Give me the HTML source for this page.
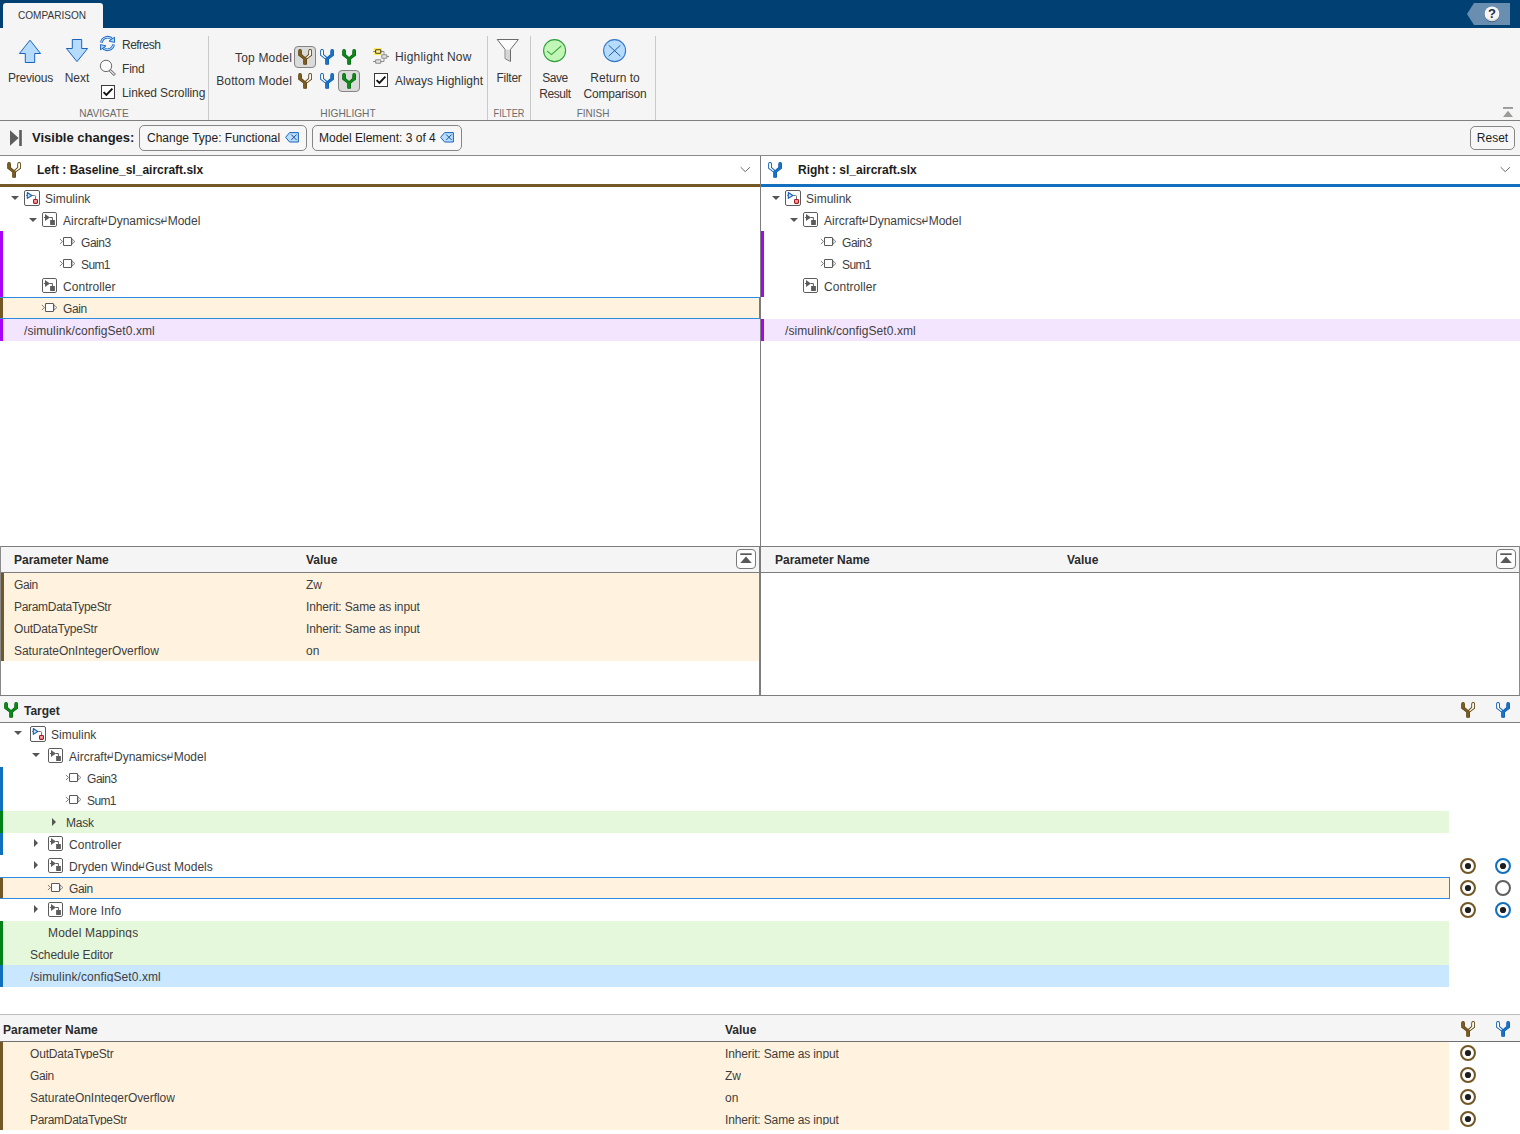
<!DOCTYPE html>
<html lang="en"><head><meta charset="utf-8"><title>Comparison</title>
<style>
html,body{margin:0;padding:0}
body{width:1520px;height:1134px;position:relative;overflow:hidden;background:#fff;
 font-family:"Liberation Sans",sans-serif;font-size:12px;color:#212121}
.abs{position:absolute}
svg{display:block;overflow:visible}
.t{white-space:nowrap;line-height:22px;height:22px;font-size:12px;color:#3e3e3e}
.tb{white-space:nowrap;line-height:16px;font-size:12px;color:#363636}
.grp{white-space:nowrap;line-height:12px;font-size:11px;color:#6b6b6b;text-align:center}
.b{font-weight:bold;color:#2a2a2a}
.clip{height:16px;overflow:hidden}
.ret{font-family:"DejaVu Sans",sans-serif;font-size:9px;color:#444;display:inline-block;width:7px;text-indent:-0.3px;transform:translateY(2.5px) scaleY(1.7);transform-origin:50% 75%}
.sep{position:absolute;top:36px;width:1px;height:84px;background:#c9c9c9}
.chip{position:absolute;top:125px;height:24px;border:1px solid #868686;border-radius:5px;background:#f7f7f7;box-sizing:content-box}
.row{position:absolute;left:0;height:22px}
</style></head><body>

<div class="abs" style="left:0;top:0;width:1520px;height:28px;background:#004073"></div>
<div class="abs" style="left:3px;top:3px;width:100px;height:26px;background:#f5f5f5;border-radius:3px 3px 0 0"></div>
<div class="abs tb" style="left:18px;top:8px;font-size:11px;line-height:14px;transform:scaleX(0.915);transform-origin:0 50%">COMPARISON</div>
<svg class="abs" style="left:1467px;top:3px" width="44" height="22" viewBox="0 0 44 22"><path d="M0 11 L7 0 H43 V22 H7 Z" fill="#698eb0"/><circle cx="25" cy="11.6" r="7.6" fill="#1f3a5c" opacity="0.55"/><circle cx="25" cy="10.8" r="7.4" fill="#f6f6f6"/><path d="M18.2 13.6 A7.4 7.4 0 0 0 31.8 13.6 A9 9 0 0 1 18.2 13.6 Z" fill="#d4d4d4"/><text x="25" y="15.2" text-anchor="middle" font-family="Liberation Sans, sans-serif" font-size="13" font-weight="bold" fill="#1d2b45">?</text></svg>
<div class="abs" style="left:0;top:28px;width:1520px;height:92px;background:#f5f5f5"></div>
<div class="abs" style="left:0;top:120px;width:1520px;height:1px;background:#7f7f7f"></div>
<div class="abs" style="left:0;top:121px;width:1520px;height:34px;background:#f5f5f5"></div>
<div class="abs" style="left:0;top:155px;width:1520px;height:1px;background:#8a8a8a"></div>
<svg class="abs" style="left:18px;top:39px" width="24" height="25" viewBox="0 0 24 25"><path d="M12 1.2 L22.6 14.5 H16.7 V23.5 H7.3 V14.5 H1.4 Z" fill="#b5dcff" stroke="#1a63bd" stroke-width="1"/></svg>
<svg class="abs" style="left:65px;top:38px" width="24" height="25" viewBox="0 0 24 25"><path d="M12 23.6 L22.6 10.5 H16.7 V1.5 H7.3 V10.5 H1.4 Z" fill="#b5dcff" stroke="#1a63bd" stroke-width="1"/></svg>
<div class="abs tb" style="left:0px;top:70px;letter-spacing:-0.19px;width:61px;text-align:center">Previous</div>
<div class="abs tb" style="left:47px;top:70px;width:60px;text-align:center">Next</div>
<svg class="abs" style="left:100px;top:36px" width="15" height="15" viewBox="0 0 15 15"><path d="M1.5 6.6 A6.1 6.1 0 0 1 12.4 3.6" fill="none" stroke="#1560bd" stroke-width="2.7"/><path d="M1.5 6.4 A6.1 6.1 0 0 1 12.2 3.6" fill="none" stroke="#a8d6ff" stroke-width="1.1"/><path d="M14.5 1.2 V6.4 L9 5.1 Z" fill="#a8d6ff" stroke="#1560bd" stroke-width="0.9" stroke-linejoin="round"/><path d="M13.5 8.4 A6.1 6.1 0 0 1 2.6 11.4" fill="none" stroke="#1560bd" stroke-width="2.7"/><path d="M13.5 8.6 A6.1 6.1 0 0 1 2.8 11.4" fill="none" stroke="#a8d6ff" stroke-width="1.1"/><path d="M0.5 13.8 V8.6 L6 9.9 Z" fill="#a8d6ff" stroke="#1560bd" stroke-width="0.9" stroke-linejoin="round"/></svg>
<div class="abs tb" style="left:122px;top:37px;letter-spacing:-0.53px;">Refresh</div>
<svg class="abs" style="left:99px;top:59px" width="17" height="17" viewBox="0 0 17 17"><path d="M10.6 11 L15.9 16" stroke="#5e5e5e" stroke-width="2.9" stroke-linecap="butt"/><path d="M11 11.4 L15.5 15.6" stroke="#ececec" stroke-width="1.3" stroke-linecap="butt"/><circle cx="7" cy="6.9" r="5.7" fill="#fafafa" stroke="#6b6b6b" stroke-width="1"/></svg>
<div class="abs tb" style="left:122px;top:61px;letter-spacing:-0.2px;">Find</div>
<svg class="abs" style="left:101px;top:85px" width="14" height="14" viewBox="0 0 14 14"><rect x="0.5" y="0.5" width="13" height="13" fill="#fff" stroke="#3c3c3c"/><path d="M2.6 7.2 L5.4 10 L11.4 3.6" fill="none" stroke="#111" stroke-width="1.9"/></svg>
<div class="abs tb" style="left:122px;top:85px;letter-spacing:-0.09px;">Linked Scrolling</div>
<div class="abs grp" style="left:54px;top:107px;width:100px;transform:scaleX(0.916)">NAVIGATE</div>
<div class="sep" style="left:208px"></div>
<div class="abs tb" style="left:192px;top:50px;letter-spacing:0.17px;width:100px;text-align:right">Top Model</div>
<div class="abs tb" style="left:192px;top:73px;letter-spacing:0.15px;width:100px;text-align:right">Bottom Model</div>
<div class="abs" style="left:294px;top:46px;width:20px;height:20px;border:1px solid #848484;border-radius:4px;background:#dbdbdb"></div>
<div class="abs" style="left:338px;top:70px;width:20px;height:20px;border:1px solid #848484;border-radius:4px;background:#dbdbdb"></div>
<svg class="abs" style="left:298px;top:49px" width="14" height="16" viewBox="0 0 14 16"><g><path d="M0.2 1.9 A1.85 1.85 0 0 1 3.9 1.9 V5.3 L7.1 8.1 L10.3 5.3 V1.9 A1.85 1.85 0 0 1 14 1.9 V6.5 L9 10.2 V15 Q9 15.8 8.2 15.8 H6 Q5.2 15.8 5.2 15 V10.2 L0.2 6.5 Z" fill="#55400f"/><path d="M0.75 1.9 A1.3 1.3 0 0 1 3.35 1.9 V5.55 L7.1 8.85 L10.85 5.55 V1.9 A1.3 1.3 0 0 1 13.45 1.9 V6.2 L8.45 9.95 V14.9 Q8.45 15.25 8.1 15.25 H6.1 Q5.75 15.25 5.75 14.9 V9.95 L0.75 6.2 Z" fill="#7b5c22"/><path d="M11.2 1.9 A0.95 0.95 0 0 1 13.1 1.9 V6.05 L8.9 9.15 L8.1 8.42 L11.2 5.71 Z" fill="#fff"/></g></svg>
<svg class="abs" style="left:320px;top:49px" width="14" height="16" viewBox="0 0 14 16"><g transform="translate(14.2,0) scale(-1,1)"><path d="M0.2 1.9 A1.85 1.85 0 0 1 3.9 1.9 V5.3 L7.1 8.1 L10.3 5.3 V1.9 A1.85 1.85 0 0 1 14 1.9 V6.5 L9 10.2 V15 Q9 15.8 8.2 15.8 H6 Q5.2 15.8 5.2 15 V10.2 L0.2 6.5 Z" fill="#0d57aa"/><path d="M0.75 1.9 A1.3 1.3 0 0 1 3.35 1.9 V5.55 L7.1 8.85 L10.85 5.55 V1.9 A1.3 1.3 0 0 1 13.45 1.9 V6.2 L8.45 9.95 V14.9 Q8.45 15.25 8.1 15.25 H6.1 Q5.75 15.25 5.75 14.9 V9.95 L0.75 6.2 Z" fill="#1873c7"/><path d="M11.2 1.9 A0.95 0.95 0 0 1 13.1 1.9 V6.05 L8.9 9.15 L8.1 8.42 L11.2 5.71 Z" fill="#fff"/></g></svg>
<svg class="abs" style="left:342px;top:49px" width="14" height="16" viewBox="0 0 14 16"><path d="M0.2 1.9 A1.85 1.85 0 0 1 3.9 1.9 V5.3 L7.1 8.1 L10.3 5.3 V1.9 A1.85 1.85 0 0 1 14 1.9 V6.5 L9 10.2 V15 Q9 15.8 8.2 15.8 H6 Q5.2 15.8 5.2 15 V10.2 L0.2 6.5 Z" fill="#07600f"/><path d="M0.75 1.9 A1.3 1.3 0 0 1 3.35 1.9 V5.55 L7.1 8.85 L10.85 5.55 V1.9 A1.3 1.3 0 0 1 13.45 1.9 V6.2 L8.45 9.95 V14.9 Q8.45 15.25 8.1 15.25 H6.1 Q5.75 15.25 5.75 14.9 V9.95 L0.75 6.2 Z" fill="#0b8a19"/></svg>
<svg class="abs" style="left:298px;top:73px" width="14" height="16" viewBox="0 0 14 16"><g><path d="M0.2 1.9 A1.85 1.85 0 0 1 3.9 1.9 V5.3 L7.1 8.1 L10.3 5.3 V1.9 A1.85 1.85 0 0 1 14 1.9 V6.5 L9 10.2 V15 Q9 15.8 8.2 15.8 H6 Q5.2 15.8 5.2 15 V10.2 L0.2 6.5 Z" fill="#55400f"/><path d="M0.75 1.9 A1.3 1.3 0 0 1 3.35 1.9 V5.55 L7.1 8.85 L10.85 5.55 V1.9 A1.3 1.3 0 0 1 13.45 1.9 V6.2 L8.45 9.95 V14.9 Q8.45 15.25 8.1 15.25 H6.1 Q5.75 15.25 5.75 14.9 V9.95 L0.75 6.2 Z" fill="#7b5c22"/><path d="M11.2 1.9 A0.95 0.95 0 0 1 13.1 1.9 V6.05 L8.9 9.15 L8.1 8.42 L11.2 5.71 Z" fill="#fff"/></g></svg>
<svg class="abs" style="left:320px;top:73px" width="14" height="16" viewBox="0 0 14 16"><g transform="translate(14.2,0) scale(-1,1)"><path d="M0.2 1.9 A1.85 1.85 0 0 1 3.9 1.9 V5.3 L7.1 8.1 L10.3 5.3 V1.9 A1.85 1.85 0 0 1 14 1.9 V6.5 L9 10.2 V15 Q9 15.8 8.2 15.8 H6 Q5.2 15.8 5.2 15 V10.2 L0.2 6.5 Z" fill="#0d57aa"/><path d="M0.75 1.9 A1.3 1.3 0 0 1 3.35 1.9 V5.55 L7.1 8.85 L10.85 5.55 V1.9 A1.3 1.3 0 0 1 13.45 1.9 V6.2 L8.45 9.95 V14.9 Q8.45 15.25 8.1 15.25 H6.1 Q5.75 15.25 5.75 14.9 V9.95 L0.75 6.2 Z" fill="#1873c7"/><path d="M11.2 1.9 A0.95 0.95 0 0 1 13.1 1.9 V6.05 L8.9 9.15 L8.1 8.42 L11.2 5.71 Z" fill="#fff"/></g></svg>
<svg class="abs" style="left:342px;top:73px" width="14" height="16" viewBox="0 0 14 16"><path d="M0.2 1.9 A1.85 1.85 0 0 1 3.9 1.9 V5.3 L7.1 8.1 L10.3 5.3 V1.9 A1.85 1.85 0 0 1 14 1.9 V6.5 L9 10.2 V15 Q9 15.8 8.2 15.8 H6 Q5.2 15.8 5.2 15 V10.2 L0.2 6.5 Z" fill="#07600f"/><path d="M0.75 1.9 A1.3 1.3 0 0 1 3.35 1.9 V5.55 L7.1 8.85 L10.85 5.55 V1.9 A1.3 1.3 0 0 1 13.45 1.9 V6.2 L8.45 9.95 V14.9 Q8.45 15.25 8.1 15.25 H6.1 Q5.75 15.25 5.75 14.9 V9.95 L0.75 6.2 Z" fill="#0b8a19"/></svg>
<svg class="abs" style="left:373px;top:48px" width="17" height="17" viewBox="0 0 17 17"><rect x="1" y="0" width="8" height="7" fill="#ffec5c"/><path d="M0 3.5 H2 M8 3.5 H11 V6.5 M14 8.5 H16 M0 13.5 H2 M8 13.5 H11 V10.5" fill="none" stroke="#8c8c8c" stroke-width="1"/><rect x="2.6" y="1.8" width="5.2" height="3.4" rx="0.8" fill="#fff3a0" stroke="#4f3f12" stroke-width="1.1"/><rect x="8.8" y="6.8" width="5" height="3.4" rx="0.8" fill="#e2e2e2" stroke="#8c8c8c" stroke-width="1.1"/><rect x="2.6" y="11.8" width="5.2" height="3.4" rx="0.8" fill="#e2e2e2" stroke="#8c8c8c" stroke-width="1.1"/></svg>
<div class="abs tb" style="left:395px;top:49px;letter-spacing:0.19px;">Highlight Now</div>
<svg class="abs" style="left:374px;top:73px" width="14" height="14" viewBox="0 0 14 14"><rect x="0.5" y="0.5" width="13" height="13" fill="#fff" stroke="#3c3c3c"/><path d="M2.6 7.2 L5.4 10 L11.4 3.6" fill="none" stroke="#111" stroke-width="1.9"/></svg>
<div class="abs tb" style="left:395px;top:73px;">Always Highlight</div>
<div class="abs grp" style="left:298px;top:107px;width:100px;transform:scaleX(0.923)">HIGHLIGHT</div>
<div class="sep" style="left:487px"></div>
<svg class="abs" style="left:496px;top:38px" width="24" height="24" viewBox="0 0 24 24"><path d="M1.2 1.5 H22.4 L14.5 11.4 V23.4 L9.1 20.6 V11.4 Z" fill="#fcfcfc" stroke="#6a6a6a" stroke-width="1" stroke-linejoin="round"/><path d="M9.6 11.6 H14 V22.6 L9.6 20.3 Z" fill="#d6d6d6"/></svg>
<div class="abs tb" style="left:479px;top:70px;letter-spacing:-0.25px;width:60px;text-align:center">Filter</div>
<div class="abs grp" style="left:459px;top:107px;width:100px;transform:scaleX(0.83)">FILTER</div>
<div class="sep" style="left:530px"></div>
<svg class="abs" style="left:542px;top:38px" width="24" height="24" viewBox="0 0 24 24"><circle cx="12.6" cy="12.6" r="11" fill="#c2f6b6" stroke="#2f9f3a" stroke-width="1.1"/><path d="M5.2 13.2 L9.5 16.6 L19.3 7.8" fill="none" stroke="#2f9f3a" stroke-width="1.05"/></svg>
<div class="abs tb" style="left:525px;top:70px;letter-spacing:-0.5px;width:60px;text-align:center">Save</div>
<div class="abs tb" style="left:525px;top:86px;letter-spacing:-0.4px;width:60px;text-align:center">Result</div>
<svg class="abs" style="left:602px;top:38px" width="24" height="24" viewBox="0 0 24 24"><circle cx="12.6" cy="12.6" r="11" fill="#b5dcff" stroke="#3677c9" stroke-width="1.1"/><path d="M6.7 7.3 L18.4 18.1 M18.4 7.3 L6.7 18.1" fill="none" stroke="#1d55a5" stroke-width="0.95"/></svg>
<div class="abs tb" style="left:575px;top:70px;width:80px;text-align:center">Return to</div>
<div class="abs tb" style="left:575px;top:86px;letter-spacing:-0.15px;width:80px;text-align:center">Comparison</div>
<div class="abs grp" style="left:543px;top:107px;width:100px;transform:scaleX(0.907)">FINISH</div>
<div class="sep" style="left:655px"></div>
<svg class="abs" style="left:1503px;top:107px" width="10" height="10" viewBox="0 0 10 10"><rect x="0" y="0" width="10" height="1.9" fill="#9b9b98"/><path d="M0 10 L5 3.8 L10 10 Z" fill="#9b9b98"/></svg>
<svg class="abs" style="left:9px;top:129px" width="14" height="18" viewBox="0 0 14 18"><path d="M1 1.2 V16.8 L9.6 9 Z" fill="#5d5d5d"/><rect x="10.2" y="1" width="2.6" height="16" fill="#5d5d5d"/></svg>
<div class="abs tb b" style="left:32px;top:129px;font-size:13px;line-height:17px;color:#1c1c1c">Visible changes:</div>
<div class="chip" style="left:139px;width:166px"></div>
<div class="abs tb" style="left:147px;top:130px;color:#1e1e1e">Change Type: Functional</div>
<svg class="abs" style="left:285px;top:132px" width="14" height="11" viewBox="0 0 14 11"><path d="M0.6 5.3 L4.6 0.6 H13.4 V10 H4.6 Z" fill="#b9deff" stroke="#1a63bd" stroke-width="1" stroke-linejoin="round"/><path d="M6.2 2.5 L11.6 8.1 M11.6 2.5 L6.2 8.1" stroke="#17509c" stroke-width="1"/></svg>
<div class="chip" style="left:312px;width:148px"></div>
<div class="abs tb" style="left:319px;top:130px;color:#1e1e1e">Model Element: 3 of 4</div>
<svg class="abs" style="left:440px;top:132px" width="14" height="11" viewBox="0 0 14 11"><path d="M0.6 5.3 L4.6 0.6 H13.4 V10 H4.6 Z" fill="#b9deff" stroke="#1a63bd" stroke-width="1" stroke-linejoin="round"/><path d="M6.2 2.5 L11.6 8.1 M11.6 2.5 L6.2 8.1" stroke="#17509c" stroke-width="1"/></svg>
<div class="chip" style="left:1470px;width:43px;top:126px;height:22px"></div>
<div class="abs tb" style="left:1470px;top:130px;width:45px;text-align:center;color:#1e1e1e">Reset</div>
<div class="abs" style="left:760px;top:156px;width:1px;height:540px;background:#7d7d7d"></div>
<svg class="abs" style="left:7px;top:162px" width="14" height="16" viewBox="0 0 14 16"><g><path d="M0.2 1.9 A1.85 1.85 0 0 1 3.9 1.9 V5.3 L7.1 8.1 L10.3 5.3 V1.9 A1.85 1.85 0 0 1 14 1.9 V6.5 L9 10.2 V15 Q9 15.8 8.2 15.8 H6 Q5.2 15.8 5.2 15 V10.2 L0.2 6.5 Z" fill="#55400f"/><path d="M0.75 1.9 A1.3 1.3 0 0 1 3.35 1.9 V5.55 L7.1 8.85 L10.85 5.55 V1.9 A1.3 1.3 0 0 1 13.45 1.9 V6.2 L8.45 9.95 V14.9 Q8.45 15.25 8.1 15.25 H6.1 Q5.75 15.25 5.75 14.9 V9.95 L0.75 6.2 Z" fill="#7b5c22"/><path d="M11.2 1.9 A0.95 0.95 0 0 1 13.1 1.9 V6.05 L8.9 9.15 L8.1 8.42 L11.2 5.71 Z" fill="#fff"/></g></svg>
<div class="abs tb b" style="left:37px;top:162px;color:#1c1c1c">Left : Baseline_sl_aircraft.slx</div>
<svg class="abs" style="left:739px;top:166px" width="12" height="7" viewBox="0 0 12 7"><path d="M1.7 1.2 L6.3 5.7 L10.9 1.2" fill="none" stroke="#5e5e5e" stroke-width="0.95"/></svg>
<div class="abs" style="left:0;top:184px;width:760px;height:3px;background:#735724"></div>
<svg class="abs" style="left:768px;top:162px" width="14" height="16" viewBox="0 0 14 16"><g transform="translate(14.2,0) scale(-1,1)"><path d="M0.2 1.9 A1.85 1.85 0 0 1 3.9 1.9 V5.3 L7.1 8.1 L10.3 5.3 V1.9 A1.85 1.85 0 0 1 14 1.9 V6.5 L9 10.2 V15 Q9 15.8 8.2 15.8 H6 Q5.2 15.8 5.2 15 V10.2 L0.2 6.5 Z" fill="#0d57aa"/><path d="M0.75 1.9 A1.3 1.3 0 0 1 3.35 1.9 V5.55 L7.1 8.85 L10.85 5.55 V1.9 A1.3 1.3 0 0 1 13.45 1.9 V6.2 L8.45 9.95 V14.9 Q8.45 15.25 8.1 15.25 H6.1 Q5.75 15.25 5.75 14.9 V9.95 L0.75 6.2 Z" fill="#1873c7"/><path d="M11.2 1.9 A0.95 0.95 0 0 1 13.1 1.9 V6.05 L8.9 9.15 L8.1 8.42 L11.2 5.71 Z" fill="#fff"/></g></svg>
<div class="abs tb b" style="left:798px;top:162px;color:#1c1c1c">Right : sl_aircraft.slx</div>
<svg class="abs" style="left:1499px;top:166px" width="12" height="7" viewBox="0 0 12 7"><path d="M1.7 1.2 L6.3 5.7 L10.9 1.2" fill="none" stroke="#5e5e5e" stroke-width="0.95"/></svg>
<div class="abs" style="left:761px;top:184px;width:759px;height:3px;background:#1070be"></div>
<div class="abs" style="left:0;top:231px;width:3px;height:66px;background:#a903f5"></div>
<div class="abs" style="left:0;top:297px;width:760px;height:22px;background:#fff3e0;box-sizing:border-box;border:1px solid #2b8be0"></div>
<div class="abs" style="left:0;top:298px;width:3px;height:20px;background:#735724"></div>
<div class="abs" style="left:0;top:319px;width:760px;height:22px;background:#f3e5fe"></div>
<div class="abs" style="left:0;top:319px;width:3px;height:22px;background:#a903f5"></div>
<svg class="abs" style="left:11px;top:196px" width="8" height="4" viewBox="0 0 8 4"><path d="M0 0 H8 L4 4 Z" fill="#555"/></svg><svg class="abs" style="left:24px;top:190px" width="16" height="16" viewBox="0 0 16 16"><rect x="0.5" y="0.5" width="15" height="15" rx="1.5" fill="#fff" stroke="#5c5c5c"/><path d="M2 5.45 H3.3 M7.8 5.45 H10.6 Q11.5 5.45 11.5 6.35 V9.4" fill="none" stroke="#747474"/><path d="M3.3 2.5 L7.8 5.45 L3.3 8.4 Z" fill="#bfe2ff" stroke="#175cb8" stroke-width="1.05" stroke-linejoin="round"/><rect x="9.55" y="9.45" width="3.9" height="3.9" rx="0.8" fill="#ff9c9c" stroke="#a01c20" stroke-width="1.1"/></svg><div class="abs t" style="left:45px;top:188px;">Simulink</div>
<svg class="abs" style="left:29px;top:218px" width="8" height="4" viewBox="0 0 8 4"><path d="M0 0 H8 L4 4 Z" fill="#555"/></svg><svg class="abs" style="left:42px;top:212px" width="16" height="16" viewBox="0 0 16 16"><rect x="0.5" y="0.5" width="14" height="14" rx="1.4" fill="#fff" stroke="#5c5c5c"/><path d="M1.9 5.5 H3.2 M7.5 5.5 H10.4 V8.2" fill="none" stroke="#5c5c5c"/><path d="M3 2.1 L7.9 5.5 L3 9 Z" fill="#5c5c5c"/><rect x="8.1" y="8" width="4.8" height="4.9" rx="0.3" fill="#5c5c5c"/></svg><div class="abs t" style="left:63px;top:210px;">Aircraft<span class="ret">&#8629;</span>Dynamics<span class="ret">&#8629;</span>Model</div>
<svg class="abs" style="left:60px;top:236px" width="16" height="11" viewBox="0 0 16 11"><path d="M-0.1 3 L2.5 5.5 L-0.1 8" fill="none" stroke="#666" stroke-width="0.85"/><path d="M12 2.9 L14.9 5.5 L12 8.1 Z" fill="#fff" stroke="#6a6a6a" stroke-width="0.8"/><rect x="3.5" y="1.5" width="8" height="8" rx="0.8" fill="#fff" stroke="#5a5a5a" stroke-width="1.05"/></svg><div class="abs t" style="left:81px;top:232px;letter-spacing:-0.45px;">Gain3</div>
<svg class="abs" style="left:60px;top:258px" width="16" height="11" viewBox="0 0 16 11"><path d="M-0.1 3 L2.5 5.5 L-0.1 8" fill="none" stroke="#666" stroke-width="0.85"/><path d="M12 2.9 L14.9 5.5 L12 8.1 Z" fill="#fff" stroke="#6a6a6a" stroke-width="0.8"/><rect x="3.5" y="1.5" width="8" height="8" rx="0.8" fill="#fff" stroke="#5a5a5a" stroke-width="1.05"/></svg><div class="abs t" style="left:81px;top:254px;letter-spacing:-0.6px;">Sum1</div>
<svg class="abs" style="left:42px;top:278px" width="16" height="16" viewBox="0 0 16 16"><rect x="0.5" y="0.5" width="14" height="14" rx="1.4" fill="#fff" stroke="#5c5c5c"/><path d="M1.9 5.5 H3.2 M7.5 5.5 H10.4 V8.2" fill="none" stroke="#5c5c5c"/><path d="M3 2.1 L7.9 5.5 L3 9 Z" fill="#5c5c5c"/><rect x="8.1" y="8" width="4.8" height="4.9" rx="0.3" fill="#5c5c5c"/></svg><div class="abs t" style="left:63px;top:276px;letter-spacing:0.05px;">Controller</div>
<svg class="abs" style="left:42px;top:302px" width="16" height="11" viewBox="0 0 16 11"><path d="M-0.1 3 L2.5 5.5 L-0.1 8" fill="none" stroke="#666" stroke-width="0.85"/><path d="M12 2.9 L14.9 5.5 L12 8.1 Z" fill="#fff" stroke="#6a6a6a" stroke-width="0.8"/><rect x="3.5" y="1.5" width="8" height="8" rx="0.8" fill="#fff" stroke="#5a5a5a" stroke-width="1.05"/></svg><div class="abs t" style="left:63px;top:298px;letter-spacing:-0.4px;">Gain</div>
<div class="abs t" style="left:24px;top:320px;letter-spacing:0.09px;">/simulink/configSet0.xml</div>
<div class="abs" style="left:761px;top:231px;width:3px;height:66px;background:#a903f5"></div>
<div class="abs" style="left:761px;top:319px;width:759px;height:22px;background:#f3e5fe"></div>
<div class="abs" style="left:761px;top:319px;width:3px;height:22px;background:#a903f5"></div>
<svg class="abs" style="left:772px;top:196px" width="8" height="4" viewBox="0 0 8 4"><path d="M0 0 H8 L4 4 Z" fill="#555"/></svg><svg class="abs" style="left:785px;top:190px" width="16" height="16" viewBox="0 0 16 16"><rect x="0.5" y="0.5" width="15" height="15" rx="1.5" fill="#fff" stroke="#5c5c5c"/><path d="M2 5.45 H3.3 M7.8 5.45 H10.6 Q11.5 5.45 11.5 6.35 V9.4" fill="none" stroke="#747474"/><path d="M3.3 2.5 L7.8 5.45 L3.3 8.4 Z" fill="#bfe2ff" stroke="#175cb8" stroke-width="1.05" stroke-linejoin="round"/><rect x="9.55" y="9.45" width="3.9" height="3.9" rx="0.8" fill="#ff9c9c" stroke="#a01c20" stroke-width="1.1"/></svg><div class="abs t" style="left:806px;top:188px;">Simulink</div>
<svg class="abs" style="left:790px;top:218px" width="8" height="4" viewBox="0 0 8 4"><path d="M0 0 H8 L4 4 Z" fill="#555"/></svg><svg class="abs" style="left:803px;top:212px" width="16" height="16" viewBox="0 0 16 16"><rect x="0.5" y="0.5" width="14" height="14" rx="1.4" fill="#fff" stroke="#5c5c5c"/><path d="M1.9 5.5 H3.2 M7.5 5.5 H10.4 V8.2" fill="none" stroke="#5c5c5c"/><path d="M3 2.1 L7.9 5.5 L3 9 Z" fill="#5c5c5c"/><rect x="8.1" y="8" width="4.8" height="4.9" rx="0.3" fill="#5c5c5c"/></svg><div class="abs t" style="left:824px;top:210px;">Aircraft<span class="ret">&#8629;</span>Dynamics<span class="ret">&#8629;</span>Model</div>
<svg class="abs" style="left:821px;top:236px" width="16" height="11" viewBox="0 0 16 11"><path d="M-0.1 3 L2.5 5.5 L-0.1 8" fill="none" stroke="#666" stroke-width="0.85"/><path d="M12 2.9 L14.9 5.5 L12 8.1 Z" fill="#fff" stroke="#6a6a6a" stroke-width="0.8"/><rect x="3.5" y="1.5" width="8" height="8" rx="0.8" fill="#fff" stroke="#5a5a5a" stroke-width="1.05"/></svg><div class="abs t" style="left:842px;top:232px;letter-spacing:-0.45px;">Gain3</div>
<svg class="abs" style="left:821px;top:258px" width="16" height="11" viewBox="0 0 16 11"><path d="M-0.1 3 L2.5 5.5 L-0.1 8" fill="none" stroke="#666" stroke-width="0.85"/><path d="M12 2.9 L14.9 5.5 L12 8.1 Z" fill="#fff" stroke="#6a6a6a" stroke-width="0.8"/><rect x="3.5" y="1.5" width="8" height="8" rx="0.8" fill="#fff" stroke="#5a5a5a" stroke-width="1.05"/></svg><div class="abs t" style="left:842px;top:254px;letter-spacing:-0.6px;">Sum1</div>
<svg class="abs" style="left:803px;top:278px" width="16" height="16" viewBox="0 0 16 16"><rect x="0.5" y="0.5" width="14" height="14" rx="1.4" fill="#fff" stroke="#5c5c5c"/><path d="M1.9 5.5 H3.2 M7.5 5.5 H10.4 V8.2" fill="none" stroke="#5c5c5c"/><path d="M3 2.1 L7.9 5.5 L3 9 Z" fill="#5c5c5c"/><rect x="8.1" y="8" width="4.8" height="4.9" rx="0.3" fill="#5c5c5c"/></svg><div class="abs t" style="left:824px;top:276px;letter-spacing:0.05px;">Controller</div>
<div class="abs t" style="left:785px;top:320px;letter-spacing:0.09px;">/simulink/configSet0.xml</div>
<div class="abs" style="left:0;top:546px;width:1520px;height:27px;background:#f5f5f5;box-sizing:border-box;border-top:1px solid #7d7d7d;border-bottom:1px solid #7d7d7d"></div>
<div class="abs" style="left:0;top:546px;width:1px;height:150px;background:#8a8a8a"></div>
<div class="abs" style="left:759px;top:546px;width:2px;height:150px;background:#7d7d7d"></div>
<div class="abs" style="left:1519px;top:546px;width:1px;height:150px;background:#8c8c8c"></div>
<div class="abs t b" style="left:14px;top:549px;">Parameter Name</div>
<div class="abs t b" style="left:306px;top:549px;">Value</div>
<svg class="abs" style="left:736px;top:549px" width="20" height="20" viewBox="0 0 20 20"><rect x="0.5" y="0.5" width="19" height="19" rx="3.5" fill="#fdfdfd" stroke="#7a7a7a"/><rect x="4.3" y="4.3" width="11.4" height="1.7" fill="#585858"/><path d="M4.3 14.1 L10 7.4 L15.7 14.1 Z" fill="#585858"/></svg>
<div class="abs t b" style="left:775px;top:549px;">Parameter Name</div>
<div class="abs t b" style="left:1067px;top:549px;">Value</div>
<svg class="abs" style="left:1496px;top:549px" width="20" height="20" viewBox="0 0 20 20"><rect x="0.5" y="0.5" width="19" height="19" rx="3.5" fill="#fdfdfd" stroke="#7a7a7a"/><rect x="4.3" y="4.3" width="11.4" height="1.7" fill="#585858"/><path d="M4.3 14.1 L10 7.4 L15.7 14.1 Z" fill="#585858"/></svg>
<div class="abs" style="left:1px;top:573px;width:758px;height:88px;background:#fff3e0"></div>
<div class="abs" style="left:1px;top:573px;width:3px;height:88px;background:#735724"></div>
<div class="abs t" style="left:14px;top:574px;letter-spacing:-0.4px;">Gain</div>
<div class="abs t" style="left:306px;top:574px;">Zw</div>
<div class="abs t" style="left:14px;top:596px;letter-spacing:-0.31px;">ParamDataTypeStr</div>
<div class="abs t" style="left:306px;top:596px;letter-spacing:-0.14px;">Inherit: Same as input</div>
<div class="abs t" style="left:14px;top:618px;letter-spacing:-0.18px;">OutDataTypeStr</div>
<div class="abs t" style="left:306px;top:618px;letter-spacing:-0.14px;">Inherit: Same as input</div>
<div class="abs t" style="left:14px;top:640px;letter-spacing:-0.05px;">SaturateOnIntegerOverflow</div>
<div class="abs t" style="left:306px;top:640px;">on</div>
<div class="abs" style="left:0;top:695px;width:1520px;height:28px;background:#f5f5f5;box-sizing:border-box;border-top:1px solid #7d7d7d;border-bottom:1px solid #7d7d7d"></div>
<svg class="abs" style="left:4px;top:702px" width="14" height="16" viewBox="0 0 14 16"><path d="M0.2 1.9 A1.85 1.85 0 0 1 3.9 1.9 V5.3 L7.1 8.1 L10.3 5.3 V1.9 A1.85 1.85 0 0 1 14 1.9 V6.5 L9 10.2 V15 Q9 15.8 8.2 15.8 H6 Q5.2 15.8 5.2 15 V10.2 L0.2 6.5 Z" fill="#07600f"/><path d="M0.75 1.9 A1.3 1.3 0 0 1 3.35 1.9 V5.55 L7.1 8.85 L10.85 5.55 V1.9 A1.3 1.3 0 0 1 13.45 1.9 V6.2 L8.45 9.95 V14.9 Q8.45 15.25 8.1 15.25 H6.1 Q5.75 15.25 5.75 14.9 V9.95 L0.75 6.2 Z" fill="#0b8a19"/></svg>
<div class="abs t b" style="left:24px;top:700px;">Target</div>
<svg class="abs" style="left:1461px;top:702px" width="14" height="16" viewBox="0 0 14 16"><g><path d="M0.2 1.9 A1.85 1.85 0 0 1 3.9 1.9 V5.3 L7.1 8.1 L10.3 5.3 V1.9 A1.85 1.85 0 0 1 14 1.9 V6.5 L9 10.2 V15 Q9 15.8 8.2 15.8 H6 Q5.2 15.8 5.2 15 V10.2 L0.2 6.5 Z" fill="#55400f"/><path d="M0.75 1.9 A1.3 1.3 0 0 1 3.35 1.9 V5.55 L7.1 8.85 L10.85 5.55 V1.9 A1.3 1.3 0 0 1 13.45 1.9 V6.2 L8.45 9.95 V14.9 Q8.45 15.25 8.1 15.25 H6.1 Q5.75 15.25 5.75 14.9 V9.95 L0.75 6.2 Z" fill="#7b5c22"/><path d="M11.2 1.9 A0.95 0.95 0 0 1 13.1 1.9 V6.05 L8.9 9.15 L8.1 8.42 L11.2 5.71 Z" fill="#fff"/></g></svg>
<svg class="abs" style="left:1496px;top:702px" width="14" height="16" viewBox="0 0 14 16"><g transform="translate(14.2,0) scale(-1,1)"><path d="M0.2 1.9 A1.85 1.85 0 0 1 3.9 1.9 V5.3 L7.1 8.1 L10.3 5.3 V1.9 A1.85 1.85 0 0 1 14 1.9 V6.5 L9 10.2 V15 Q9 15.8 8.2 15.8 H6 Q5.2 15.8 5.2 15 V10.2 L0.2 6.5 Z" fill="#0d57aa"/><path d="M0.75 1.9 A1.3 1.3 0 0 1 3.35 1.9 V5.55 L7.1 8.85 L10.85 5.55 V1.9 A1.3 1.3 0 0 1 13.45 1.9 V6.2 L8.45 9.95 V14.9 Q8.45 15.25 8.1 15.25 H6.1 Q5.75 15.25 5.75 14.9 V9.95 L0.75 6.2 Z" fill="#1873c7"/><path d="M11.2 1.9 A0.95 0.95 0 0 1 13.1 1.9 V6.05 L8.9 9.15 L8.1 8.42 L11.2 5.71 Z" fill="#fff"/></g></svg>
<div class="abs" style="left:0;top:767px;width:3px;height:88px;background:#1070be"></div>
<div class="abs" style="left:0;top:811px;width:1449px;height:22px;background:#e5f8dc"></div>
<div class="abs" style="left:0;top:811px;width:3px;height:22px;background:#04821a"></div>
<div class="abs" style="left:0;top:877px;width:1450px;height:22px;background:#fff3e0;box-sizing:border-box;border:1px solid #2b8be0"></div>
<div class="abs" style="left:0;top:878px;width:3px;height:20px;background:#735724"></div>
<div class="abs" style="left:0;top:921px;width:1449px;height:44px;background:#e5f8dc"></div>
<div class="abs" style="left:0;top:921px;width:3px;height:44px;background:#04821a"></div>
<div class="abs" style="left:0;top:965px;width:1449px;height:22px;background:#c9e7ff"></div>
<div class="abs" style="left:0;top:965px;width:3px;height:22px;background:#1070be"></div>
<svg class="abs" style="left:14px;top:731px" width="8" height="4" viewBox="0 0 8 4"><path d="M0 0 H8 L4 4 Z" fill="#555"/></svg><svg class="abs" style="left:30px;top:726px" width="16" height="16" viewBox="0 0 16 16"><rect x="0.5" y="0.5" width="15" height="15" rx="1.5" fill="#fff" stroke="#5c5c5c"/><path d="M2 5.45 H3.3 M7.8 5.45 H10.6 Q11.5 5.45 11.5 6.35 V9.4" fill="none" stroke="#747474"/><path d="M3.3 2.5 L7.8 5.45 L3.3 8.4 Z" fill="#bfe2ff" stroke="#175cb8" stroke-width="1.05" stroke-linejoin="round"/><rect x="9.55" y="9.45" width="3.9" height="3.9" rx="0.8" fill="#ff9c9c" stroke="#a01c20" stroke-width="1.1"/></svg><div class="abs t" style="left:51px;top:724px;">Simulink</div>
<svg class="abs" style="left:32px;top:753px" width="8" height="4" viewBox="0 0 8 4"><path d="M0 0 H8 L4 4 Z" fill="#555"/></svg><svg class="abs" style="left:48px;top:748px" width="16" height="16" viewBox="0 0 16 16"><rect x="0.5" y="0.5" width="14" height="14" rx="1.4" fill="#fff" stroke="#5c5c5c"/><path d="M1.9 5.5 H3.2 M7.5 5.5 H10.4 V8.2" fill="none" stroke="#5c5c5c"/><path d="M3 2.1 L7.9 5.5 L3 9 Z" fill="#5c5c5c"/><rect x="8.1" y="8" width="4.8" height="4.9" rx="0.3" fill="#5c5c5c"/></svg><div class="abs t" style="left:69px;top:746px;">Aircraft<span class="ret">&#8629;</span>Dynamics<span class="ret">&#8629;</span>Model</div>
<svg class="abs" style="left:66px;top:772px" width="16" height="11" viewBox="0 0 16 11"><path d="M-0.1 3 L2.5 5.5 L-0.1 8" fill="none" stroke="#666" stroke-width="0.85"/><path d="M12 2.9 L14.9 5.5 L12 8.1 Z" fill="#fff" stroke="#6a6a6a" stroke-width="0.8"/><rect x="3.5" y="1.5" width="8" height="8" rx="0.8" fill="#fff" stroke="#5a5a5a" stroke-width="1.05"/></svg><div class="abs t" style="left:87px;top:768px;letter-spacing:-0.45px;">Gain3</div>
<svg class="abs" style="left:66px;top:794px" width="16" height="11" viewBox="0 0 16 11"><path d="M-0.1 3 L2.5 5.5 L-0.1 8" fill="none" stroke="#666" stroke-width="0.85"/><path d="M12 2.9 L14.9 5.5 L12 8.1 Z" fill="#fff" stroke="#6a6a6a" stroke-width="0.8"/><rect x="3.5" y="1.5" width="8" height="8" rx="0.8" fill="#fff" stroke="#5a5a5a" stroke-width="1.05"/></svg><div class="abs t" style="left:87px;top:790px;letter-spacing:-0.6px;">Sum1</div>
<svg class="abs" style="left:52px;top:818px" width="4" height="8" viewBox="0 0 4 8"><path d="M0 0 V8 L4 4 Z" fill="#555"/></svg>
<div class="abs t clip" style="left:66px;top:812px;letter-spacing:-0.2px;">Mask</div>
<svg class="abs" style="left:34px;top:839px" width="4" height="8" viewBox="0 0 4 8"><path d="M0 0 V8 L4 4 Z" fill="#555"/></svg><svg class="abs" style="left:48px;top:836px" width="16" height="16" viewBox="0 0 16 16"><rect x="0.5" y="0.5" width="14" height="14" rx="1.4" fill="#fff" stroke="#5c5c5c"/><path d="M1.9 5.5 H3.2 M7.5 5.5 H10.4 V8.2" fill="none" stroke="#5c5c5c"/><path d="M3 2.1 L7.9 5.5 L3 9 Z" fill="#5c5c5c"/><rect x="8.1" y="8" width="4.8" height="4.9" rx="0.3" fill="#5c5c5c"/></svg><div class="abs t" style="left:69px;top:834px;letter-spacing:0.05px;">Controller</div>
<svg class="abs" style="left:34px;top:861px" width="4" height="8" viewBox="0 0 4 8"><path d="M0 0 V8 L4 4 Z" fill="#555"/></svg><svg class="abs" style="left:48px;top:858px" width="16" height="16" viewBox="0 0 16 16"><rect x="0.5" y="0.5" width="14" height="14" rx="1.4" fill="#fff" stroke="#5c5c5c"/><path d="M1.9 5.5 H3.2 M7.5 5.5 H10.4 V8.2" fill="none" stroke="#5c5c5c"/><path d="M3 2.1 L7.9 5.5 L3 9 Z" fill="#5c5c5c"/><rect x="8.1" y="8" width="4.8" height="4.9" rx="0.3" fill="#5c5c5c"/></svg><div class="abs t" style="left:69px;top:856px;">Dryden Wind<span class="ret">&#8629;</span>Gust Models</div>
<svg class="abs" style="left:48px;top:882px" width="16" height="11" viewBox="0 0 16 11"><path d="M-0.1 3 L2.5 5.5 L-0.1 8" fill="none" stroke="#666" stroke-width="0.85"/><path d="M12 2.9 L14.9 5.5 L12 8.1 Z" fill="#fff" stroke="#6a6a6a" stroke-width="0.8"/><rect x="3.5" y="1.5" width="8" height="8" rx="0.8" fill="#fff" stroke="#5a5a5a" stroke-width="1.05"/></svg><div class="abs t" style="left:69px;top:878px;letter-spacing:-0.4px;">Gain</div>
<svg class="abs" style="left:34px;top:905px" width="4" height="8" viewBox="0 0 4 8"><path d="M0 0 V8 L4 4 Z" fill="#555"/></svg><svg class="abs" style="left:48px;top:902px" width="16" height="16" viewBox="0 0 16 16"><rect x="0.5" y="0.5" width="14" height="14" rx="1.4" fill="#fff" stroke="#5c5c5c"/><path d="M1.9 5.5 H3.2 M7.5 5.5 H10.4 V8.2" fill="none" stroke="#5c5c5c"/><path d="M3 2.1 L7.9 5.5 L3 9 Z" fill="#5c5c5c"/><rect x="8.1" y="8" width="4.8" height="4.9" rx="0.3" fill="#5c5c5c"/></svg><div class="abs t" style="left:69px;top:900px;letter-spacing:0.2px;">More Info</div>
<div class="abs t clip" style="left:48px;top:922px;letter-spacing:0.16px;">Model Mappings</div>
<div class="abs t clip" style="left:30px;top:944px;letter-spacing:-0.1px;">Schedule Editor</div>
<div class="abs t clip" style="left:30px;top:966px;letter-spacing:0.09px;">/simulink/configSet0.xml</div>
<svg class="abs" style="left:1459px;top:857px" width="18" height="18" viewBox="0 0 18 18"><circle cx="9" cy="9" r="6.95" fill="#fff" stroke="#735724" stroke-width="2.05"/><circle cx="9" cy="9" r="3.1" fill="#1e1e1e"/></svg>
<svg class="abs" style="left:1494px;top:857px" width="18" height="18" viewBox="0 0 18 18"><circle cx="9" cy="9" r="6.95" fill="#fff" stroke="#1070be" stroke-width="2.05"/><circle cx="9" cy="9" r="3.1" fill="#1e1e1e"/></svg>
<svg class="abs" style="left:1459px;top:879px" width="18" height="18" viewBox="0 0 18 18"><circle cx="9" cy="9" r="6.95" fill="#fff" stroke="#735724" stroke-width="2.05"/><circle cx="9" cy="9" r="3.1" fill="#1e1e1e"/></svg>
<svg class="abs" style="left:1494px;top:879px" width="18" height="18" viewBox="0 0 18 18"><circle cx="9" cy="9" r="6.95" fill="#fff" stroke="#5f5f5f" stroke-width="2.05"/></svg>
<svg class="abs" style="left:1459px;top:901px" width="18" height="18" viewBox="0 0 18 18"><circle cx="9" cy="9" r="6.95" fill="#fff" stroke="#735724" stroke-width="2.05"/><circle cx="9" cy="9" r="3.1" fill="#1e1e1e"/></svg>
<svg class="abs" style="left:1494px;top:901px" width="18" height="18" viewBox="0 0 18 18"><circle cx="9" cy="9" r="6.95" fill="#fff" stroke="#1070be" stroke-width="2.05"/><circle cx="9" cy="9" r="3.1" fill="#1e1e1e"/></svg>
<div class="abs" style="left:0;top:1014px;width:1520px;height:28px;background:#f5f5f5;box-sizing:border-box;border-top:1px solid #bdbdbd;border-bottom:1px solid #6f6f6f"></div>
<div class="abs t b" style="left:3px;top:1019px;">Parameter Name</div>
<div class="abs t b" style="left:725px;top:1019px;">Value</div>
<svg class="abs" style="left:1461px;top:1021px" width="14" height="16" viewBox="0 0 14 16"><g><path d="M0.2 1.9 A1.85 1.85 0 0 1 3.9 1.9 V5.3 L7.1 8.1 L10.3 5.3 V1.9 A1.85 1.85 0 0 1 14 1.9 V6.5 L9 10.2 V15 Q9 15.8 8.2 15.8 H6 Q5.2 15.8 5.2 15 V10.2 L0.2 6.5 Z" fill="#55400f"/><path d="M0.75 1.9 A1.3 1.3 0 0 1 3.35 1.9 V5.55 L7.1 8.85 L10.85 5.55 V1.9 A1.3 1.3 0 0 1 13.45 1.9 V6.2 L8.45 9.95 V14.9 Q8.45 15.25 8.1 15.25 H6.1 Q5.75 15.25 5.75 14.9 V9.95 L0.75 6.2 Z" fill="#7b5c22"/><path d="M11.2 1.9 A0.95 0.95 0 0 1 13.1 1.9 V6.05 L8.9 9.15 L8.1 8.42 L11.2 5.71 Z" fill="#fff"/></g></svg>
<svg class="abs" style="left:1496px;top:1021px" width="14" height="16" viewBox="0 0 14 16"><g transform="translate(14.2,0) scale(-1,1)"><path d="M0.2 1.9 A1.85 1.85 0 0 1 3.9 1.9 V5.3 L7.1 8.1 L10.3 5.3 V1.9 A1.85 1.85 0 0 1 14 1.9 V6.5 L9 10.2 V15 Q9 15.8 8.2 15.8 H6 Q5.2 15.8 5.2 15 V10.2 L0.2 6.5 Z" fill="#0d57aa"/><path d="M0.75 1.9 A1.3 1.3 0 0 1 3.35 1.9 V5.55 L7.1 8.85 L10.85 5.55 V1.9 A1.3 1.3 0 0 1 13.45 1.9 V6.2 L8.45 9.95 V14.9 Q8.45 15.25 8.1 15.25 H6.1 Q5.75 15.25 5.75 14.9 V9.95 L0.75 6.2 Z" fill="#1873c7"/><path d="M11.2 1.9 A0.95 0.95 0 0 1 13.1 1.9 V6.05 L8.9 9.15 L8.1 8.42 L11.2 5.71 Z" fill="#fff"/></g></svg>
<div class="abs" style="left:0;top:1042px;width:1449px;height:88px;background:#fff3e0"></div>
<div class="abs" style="left:0;top:1042px;width:3px;height:88px;background:#735724"></div>
<div class="abs t clip" style="left:30px;top:1043px;letter-spacing:-0.18px;">OutDataTypeStr</div>
<div class="abs t clip" style="left:725px;top:1043px;letter-spacing:-0.14px;">Inherit: Same as input</div>
<svg class="abs" style="left:1459px;top:1044px" width="18" height="18" viewBox="0 0 18 18"><circle cx="9" cy="9" r="6.95" fill="#fff" stroke="#735724" stroke-width="2.05"/><circle cx="9" cy="9" r="3.1" fill="#1e1e1e"/></svg>
<div class="abs t clip" style="left:30px;top:1065px;letter-spacing:-0.4px;">Gain</div>
<div class="abs t clip" style="left:725px;top:1065px;">Zw</div>
<svg class="abs" style="left:1459px;top:1066px" width="18" height="18" viewBox="0 0 18 18"><circle cx="9" cy="9" r="6.95" fill="#fff" stroke="#735724" stroke-width="2.05"/><circle cx="9" cy="9" r="3.1" fill="#1e1e1e"/></svg>
<div class="abs t clip" style="left:30px;top:1087px;letter-spacing:-0.05px;">SaturateOnIntegerOverflow</div>
<div class="abs t clip" style="left:725px;top:1087px;">on</div>
<svg class="abs" style="left:1459px;top:1088px" width="18" height="18" viewBox="0 0 18 18"><circle cx="9" cy="9" r="6.95" fill="#fff" stroke="#735724" stroke-width="2.05"/><circle cx="9" cy="9" r="3.1" fill="#1e1e1e"/></svg>
<div class="abs t clip" style="left:30px;top:1109px;letter-spacing:-0.31px;">ParamDataTypeStr</div>
<div class="abs t clip" style="left:725px;top:1109px;letter-spacing:-0.14px;">Inherit: Same as input</div>
<svg class="abs" style="left:1459px;top:1110px" width="18" height="18" viewBox="0 0 18 18"><circle cx="9" cy="9" r="6.95" fill="#fff" stroke="#735724" stroke-width="2.05"/><circle cx="9" cy="9" r="3.1" fill="#1e1e1e"/></svg>
</body></html>
